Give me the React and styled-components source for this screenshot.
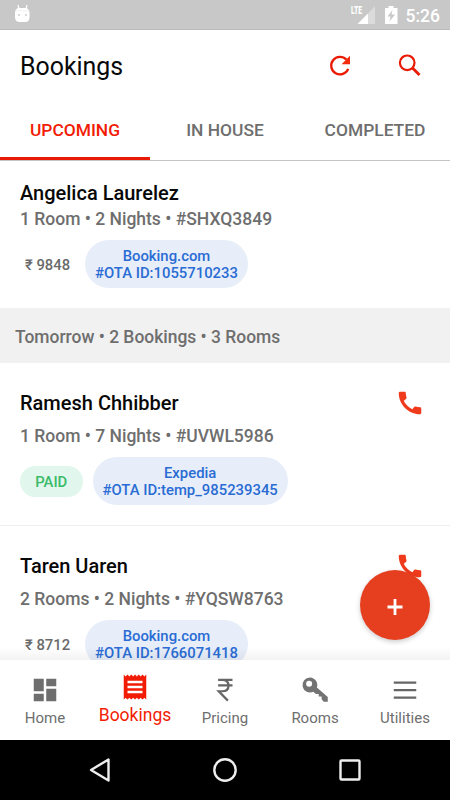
import React from "react";
import styled, { createGlobalStyle } from "styled-components";
import { MdCall, MdDashboard, MdReceipt } from "react-icons/md";

const bookings = [
  {
    name: "Angelica Laurelez",
    detail: "1 Room • 2 Nights • #SHXQ3849",
    price: "₹ 9848",
    source: "Booking.com",
    ota: "#OTA ID:1055710233",
    compact: true,
  },
  {
    name: "Ramesh Chhibber",
    detail: "1 Room • 7 Nights • #UVWL5986",
    paid: true,
    source: "Expedia",
    ota: "#OTA ID:temp_985239345",
  },
  {
    name: "Taren Uaren",
    detail: "2 Rooms • 2 Nights • #YQSW8763",
    price: "₹ 8712",
    source: "Booking.com",
    ota: "#OTA ID:1766071418",
  },
];

const Booking = ({ booking }) => (
  <Item $compact={booking.compact}>
    <Name>{booking.name}</Name>
    <Detail $compact={booking.compact}>{booking.detail}</Detail>
    <Tags>
      {booking.paid ? <Paid>PAID</Paid> : <Price>{booking.price}</Price>}
      <Source>
        <span>{booking.source}</span>
        <span>{booking.ota}</span>
      </Source>
    </Tags>
    {!booking.compact && (
      <Call>
        <MdCall />
      </Call>
    )}
  </Item>
);

const StatusIcons = () => (
  <svg width="54" height="30" viewBox="0 0 54 30" fill="#fff">
    <path d="M24 6v18H7z" opacity=".35" />
    <path d="M17 13.500V24H6.500z" />
    <path
      fillRule="evenodd"
      d="M37.500 6h5v2h4v16H34V8h3.500zM41.500 10l-5 6.500h3l-1 5 5.500-7h-3.500z"
    />
  </svg>
);

const App = () => {
  return (
    <Screen>
      <GlobalStyle />
      <StatusBar>
        <svg width="16" height="19" viewBox="0 0 16 19">
          <path d="M4 1l1 4M13 1l-1 4" stroke="#fff" strokeWidth="1.200" />
          <path d="M1 8.500Q1.500 4 5 4h6.500q3.500 0 4 4.500V13q0 5-4 5H5.500Q1 18 1 13z" fill="#fff" />
          <path d="M2 6.800h13" stroke="#e8e8e8" strokeWidth=".6" />
          <circle cx="5" cy="11" r=".9" fill="#c8c8c8" />
          <circle cx="12" cy="11" r=".9" fill="#c8c8c8" />
        </svg>
        <StatusRight>
          <Lte>LTE</Lte>
          <StatusIcons />
          <Clock>5:26</Clock>
        </StatusRight>
      </StatusBar>
      <Header>
        <Title>Bookings</Title>
        <HeaderIcons>
          <svg width="24" height="24" viewBox="0 0 24 24">
            <path d="M20.200 14.800A8.800 8.800 0 1 1 18.400 5.600" fill="none" stroke="#ea1a05" strokeWidth="2.300" />
            <path d="M22 1.800v8.400h-8.400z" fill="#f4290c" />
          </svg>
          <svg width="24" height="24" viewBox="0 0 24 24" fill="none" stroke="#ea1a05">
            <circle cx="9.200" cy="8.800" r="7.300" strokeWidth="2.200" />
            <path d="M14.500 14l7 7" strokeWidth="2.800" />
          </svg>
        </HeaderIcons>
      </Header>
      <Tabs>
        <Tab $active>UPCOMING</Tab>
        <Tab>IN HOUSE</Tab>
        <Tab>COMPLETED</Tab>
      </Tabs>
      <List>
        <Booking booking={bookings[0]} />
        <DayBar>Tomorrow • 2 Bookings • 3 Rooms</DayBar>
        <Booking booking={bookings[1]} />
        <Booking booking={bookings[2]} />
        <ListShade />
      </List>
      <AddButton>
        <svg width="16" height="16" viewBox="0 0 16 16">
          <path d="M8 0v16M.5 8h15" stroke="#fff" strokeWidth="2.800" />
        </svg>
      </AddButton>
      <BottomNav>
        <NavItem>
          <MdDashboard />
          <span>Home</span>
        </NavItem>
        <NavItem $active>
          <MdReceipt />
          <span>Bookings</span>
        </NavItem>
        <NavItem>
          <svg viewBox="0 0 24 24">
            <path
              d="M6.500 3.900h11.500M6.500 8.300h11.500M6.500 3.900H10q4.800.2 4.800 4.600t-5.100 4.500H7l7.300 7.500"
              fill="none"
              stroke="#666"
              strokeWidth="1.800"
            />
          </svg>
          <span>Pricing</span>
        </NavItem>
        <NavItem>
          <svg viewBox="0 0 24 24" fill="#737373">
            <path
              fillRule="evenodd"
              d="M8 2a6 6 0 1 0 2.600 11.400l2.200 1.800h2.200v2h2.300v2.200l1.700 2h3.200v-3.800L13.500 10A6 6 0 0 0 8 2zM7.300 4.600a2.400 2.400 0 1 1 0 4.800 2.400 2.400 0 0 1 0-4.800z"
            />
          </svg>
          <span>Rooms</span>
        </NavItem>
        <NavItem>
          <svg viewBox="0 0 24 24">
            <path d="M3 6h18M3 12h18M3 18h18" stroke="#666" strokeWidth="1.800" />
          </svg>
          <span>Utilities</span>
        </NavItem>
      </BottomNav>
      <SystemNav>
        <svg viewBox="0 0 30 30">
          <path d="M23.500 4.500v21L6 15z" />
        </svg>
        <svg viewBox="0 0 30 30">
          <circle cx="15" cy="15" r="10.700" />
        </svg>
        <svg viewBox="0 0 30 30">
          <rect x="5.500" y="5.500" width="19" height="19" rx="1" />
        </svg>
      </SystemNav>
    </Screen>
  );
};

export default App;

const GlobalStyle = createGlobalStyle`
  * {
    box-sizing: border-box;
  }

  body {
    margin: 0;
    background-color: white;
    font-family: Roboto, "Noto Sans", sans-serif;
  }
`;

const Screen = styled.div`
  position: relative;
  width: 450px;
  height: 800px;
  display: flex;
  flex-direction: column;
  overflow: hidden;
  background-color: white;
`;

const StatusBar = styled.div`
  height: 30px;
  display: flex;
  justify-content: space-between;
  padding: 4px 10px 0 14px;
  background-color: #c8c8c8;
  border-bottom: 1px solid #bcbcbc;
`;

const StatusRight = styled.div`
  display: flex;
  height: 30px;
  margin-top: -4px;
`;

const Lte = styled.span`
  width: 11px;
  margin: 5px -11px 0 0;
  font-size: 10px;
  line-height: 11px;
  font-weight: 900;
  color: white;
  transform: scaleX(0.68);
  transform-origin: left;
`;

const Clock = styled.span`
  margin-left: 1px;
  font-size: 17.5px;
  line-height: 32px;
  font-weight: 500;
  color: white;
`;

const Header = styled.div`
  height: 70px;
  display: flex;
  align-items: center;
  justify-content: space-between;
  padding: 1px 28px 0 20px;
`;

const Title = styled.h1`
  margin: 0;
  padding-top: 2px;
  font-size: 24.9px;
  font-weight: 400;
  color: #080808;
`;

const HeaderIcons = styled.div`
  display: flex;
  align-items: center;
  gap: 46px;
`;

const Tabs = styled.div`
  height: 61px;
  display: flex;
  border-bottom: 1px solid #c4c4c4;
`;

const Tab = styled.div`
  flex: 1;
  height: 60px;
  line-height: 61px;
  text-align: center;
  font-size: 17.4px;
  font-weight: 500;
  color: ${(props) => (props.$active ? "#f21c05" : "#6e6e6e")};
  box-shadow: ${(props) => (props.$active ? "inset 0 -3px #e91a05" : "none")};
`;

const List = styled.div`
  position: relative;
  height: 499px;
  overflow: hidden;
`;

const Item = styled.div`
  position: relative;
  height: ${(props) => (props.$compact ? "147px" : "163px")};
  padding: ${(props) => (props.$compact ? "20px" : "28px")} 20px 0;
  border-bottom: ${(props) => (props.$compact ? "none" : "1px solid #eee")};
`;

const Name = styled.div`
  font-size: 20px;
  line-height: 25px;
  font-weight: 500;
  color: #080808;
`;

const Detail = styled.div`
  margin-top: ${(props) => (props.$compact ? "1px" : "8px")};
  font-size: 17.5px;
  line-height: 24px;
  font-weight: 500;
  color: #6e6e6e;
`;

const Tags = styled.div`
  display: flex;
  align-items: center;
  margin-top: 9px;
`;

const Price = styled.div`
  width: 65px;
  padding: 2px 0 0 5px;
  font-size: 14.8px;
  font-weight: 500;
  color: #6a6a6a;
`;

const Paid = styled.div`
  width: 62.5px;
  height: 31px;
  margin-right: 10px;
  border-radius: 16px;
  line-height: 33px;
  text-align: center;
  font-size: 14.8px;
  font-weight: 500;
  color: #3abb6a;
  background-color: #e1f6ec;
`;

const Source = styled.div`
  height: 48px;
  display: flex;
  flex-direction: column;
  align-items: center;
  padding: 8px 10px 0;
  border-radius: 24px;
  font-size: 14.85px;
  line-height: 17px;
  font-weight: 500;
  color: #2a6cd4;
  background-color: #e7eef9;
`;

const Call = styled.div`
  position: absolute;
  top: 25px;
  right: 25px;
  font-size: 30px;
  line-height: 0;
  color: #f03a1c;
`;

const DayBar = styled.div`
  height: 55px;
  padding-left: 15px;
  line-height: 58px;
  font-size: 17.45px;
  font-weight: 500;
  color: #6e6e6e;
  background-color: #f1f1f1;
`;

const ListShade = styled.div`
  position: absolute;
  left: 0;
  right: 0;
  bottom: 0;
  height: 13px;
  background: linear-gradient(rgba(0, 0, 0, 0), rgba(0, 0, 0, 0.05));
`;

const AddButton = styled.div`
  position: absolute;
  right: 20px;
  bottom: 160px;
  width: 70px;
  height: 70px;
  display: flex;
  align-items: center;
  justify-content: center;
  padding-top: 4px;
  border-radius: 50%;
  background-color: #e63f20;
  box-shadow: 0 2px 5px rgba(0, 0, 0, 0.2);
`;

const BottomNav = styled.div`
  height: 80px;
  display: flex;
  background-color: white;
`;

const NavItem = styled.div`
  flex: 1;
  display: flex;
  flex-direction: column;
  align-items: center;
  padding-top: ${(props) => (props.$active ? "12px" : "15px")};
  font-size: ${(props) => (props.$active ? "17.5px" : "15px")};
  line-height: 26px;
  color: ${(props) => (props.$active ? "#f21c05" : "#6e6e6e")};

  svg {
    width: 30px;
    height: 30px;
    flex-shrink: 0;
  }
`;

const SystemNav = styled.div`
  height: 60px;
  display: flex;
  align-items: center;
  justify-content: center;
  gap: 95px;
  background-color: black;

  svg {
    width: 30px;
    height: 30px;
    fill: none;
    stroke: #eee;
    stroke-width: 2.4;
    stroke-linejoin: round;
  }
`;
